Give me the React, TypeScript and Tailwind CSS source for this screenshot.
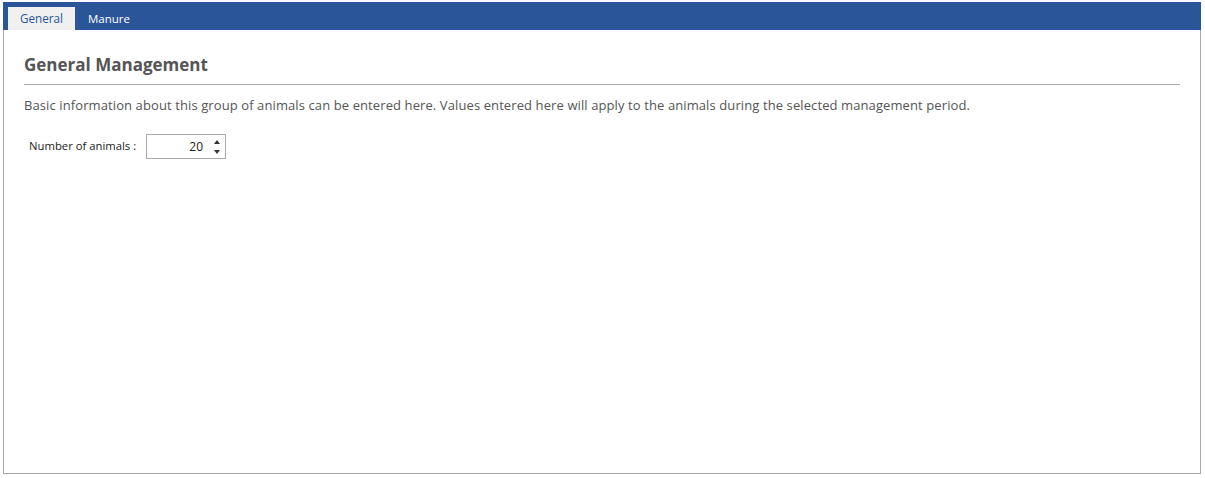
export default function App() {
  return (
    <div className="w-[1205px] h-[478px] bg-white relative" style={{ fontFamily: '"Open Sans", "Noto Sans", sans-serif' }}>
      <div className="absolute left-[3px] top-[2px] w-[1198px] h-[472px] flex flex-col">
        {/* Tab strip */}
        <div className="h-[28px] bg-[#2a5699] flex items-end pl-[5px] shrink-0">
          <div className="h-[23px] w-[67px] bg-[#f0f0f0] flex items-center justify-center text-[11.7px] text-[#2a5699]">
            General
          </div>
          <div className="h-[23px] px-[13px] flex items-center text-[11.5px] text-white">Manure</div>
        </div>

        {/* Panel */}
        <div className="flex-1 border-x border-b border-[#aaaaaa] px-[20px] pt-[23px]">
          <h1 className="text-[17px] font-bold text-[#555555] leading-[24px]">General Management</h1>
          <div className="mt-[7px] border-t border-[#a8a8a8]" />
          <p className="mt-[11px] text-[13px] text-[#555555] leading-[18px] tracking-[0.1px]">
            Basic information about this group of animals can be entered here. Values entered here will apply to the animals during the selected management period.
          </p>
          <div className="mt-[20px] flex items-center">
            <span className="ml-[5px] w-[117px] text-[11.3px] text-[#222222]">Number of animals :</span>
            <div className="w-[80px] h-[25px] border border-[#aaaaaa] flex items-center">
              <span className="flex-1 text-right text-[12px] text-[#222222] pr-[6px]">20</span>
              <div className="w-[16px] pr-[1px] flex flex-col items-center justify-center gap-[6px]">
                <svg width="6" height="4" viewBox="0 0 6 4"><path d="M3 0 L6 4 L0 4 Z" fill="#333" /></svg>
                <svg width="6" height="4" viewBox="0 0 6 4"><path d="M0 0 L6 0 L3 4 Z" fill="#333" /></svg>
              </div>
            </div>
          </div>
        </div>
      </div>
    </div>
  );
}
